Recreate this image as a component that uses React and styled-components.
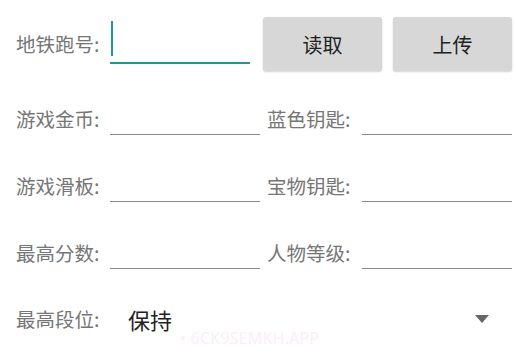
import styled, { createGlobalStyle } from "styled-components";

const GlobalStyle = createGlobalStyle`
  body {
    margin: 0;
    background: #ffffff;
    font-family: "Noto Sans CJK SC", "Noto Sans", sans-serif;
  }
`;

const Page = styled.div`
  position: relative;
  width: 516px;
  height: 359px;
  overflow: hidden;
  padding: 17px 4px 0 16px;
  box-sizing: border-box;
  background: #ffffff;
`;

const TopRow = styled.div`
  display: flex;
  align-items: center;
  height: 54px;
`;

const Label = styled.span`
  display: block;
  width: 94px;
  flex-shrink: 0;
  font-size: 19.5px;
  line-height: 34px;
  color: #767676;
  white-space: nowrap;
`;

const ActiveField = styled.div`
  position: relative;
  width: 141px;
  height: 42px;
  align-self: flex-end;
  margin-bottom: 7px;
  border-bottom: 2px solid #1e9a8d;
  &::before {
    content: "";
    position: absolute;
    left: 1px;
    top: 1px;
    width: 2px;
    height: 35px;
    background: #1e9a8d;
  }
`;

const Buttons = styled.div`
  display: flex;
  gap: 11px;
  margin-left: 13px;
`;

const Button = styled.button`
  width: 119px;
  height: 54px;
  border: none;
  border-radius: 3px;
  background: #d7d7d7;
  box-shadow: 0 1px 2px rgba(0, 0, 0, 0.18);
  font-family: "Noto Sans CJK SC", "Noto Sans", sans-serif;
  font-size: 20px;
  color: #222222;
  padding: 0;
`;

const Grid = styled.div`
  display: grid;
  grid-template-columns: 94px 150px 102px 150px;
  grid-auto-rows: 52px;
  row-gap: 15px;
  margin-top: 13px;
  & > ${Label} {
    align-self: end;
  }
  & > ${Label}:nth-child(4n + 3) {
    padding-left: 7px;
  }
`;

const Field = styled.div`
  align-self: end;
  height: 30px;
  border-bottom: 1px solid #8a8a8a;
  margin-bottom: 1px;
`;

const SpinnerRow = styled.div`
  display: flex;
  align-items: center;
  height: 48px;
  margin-top: 25px;
`;

const SpinnerValue = styled.span`
  flex: 1;
  padding-left: 18px;
  font-size: 22px;
  color: #222222;
`;

const Arrow = styled.span`
  width: 0;
  height: 0;
  border-left: 7px solid transparent;
  border-right: 7px solid transparent;
  border-top: 8px solid #666666;
  margin-right: 23px;
`;

const Watermark = styled.div`
  position: absolute;
  left: 180px;
  top: 327px;
  font-family: "Noto Sans", sans-serif;
  font-size: 16px;
  color: #fdedf7;
  letter-spacing: 0.2px;
`;

const fields = [
  ["游戏金币:", "蓝色钥匙:"],
  ["游戏滑板:", "宝物钥匙:"],
  ["最高分数:", "人物等级:"],
];

export default function App() {
  return (
    <>
      <GlobalStyle />
      <Page>
        <TopRow>
          <Label>地铁跑号:</Label>
          <ActiveField />
          <Buttons>
            <Button>读取</Button>
            <Button>上传</Button>
          </Buttons>
        </TopRow>
        <Grid>
          {fields.map(([a, b]) => [
            <Label key={a}>{a}</Label>,
            <Field key={a + "f"} />,
            <Label key={b}>{b}</Label>,
            <Field key={b + "f"} />,
          ])}
        </Grid>
        <SpinnerRow>
          <Label>最高段位:</Label>
          <SpinnerValue>保持</SpinnerValue>
          <Arrow />
        </SpinnerRow>
        <Watermark>• 6CK9SEMKH.APP</Watermark>
      </Page>
    </>
  );
}
